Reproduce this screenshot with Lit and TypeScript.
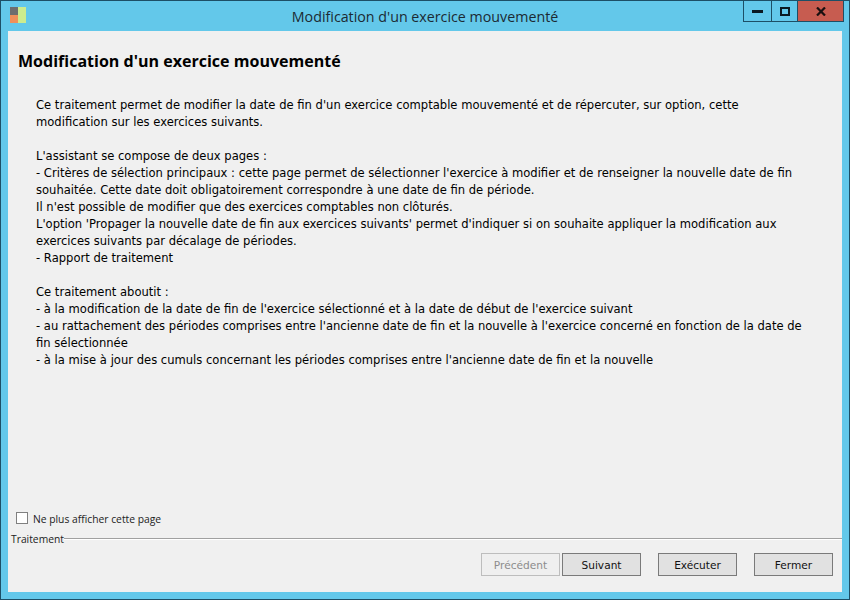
import { LitElement, html, css } from 'lit';
import { customElement } from 'lit/decorators.js';

const paragraphs: string[][] = [
  [
    "Ce traitement permet de modifier la date de fin d'un exercice comptable mouvementé et de répercuter, sur option, cette",
    'modification sur les exercices suivants.',
  ],
  [
    "L'assistant se compose de deux pages :",
    '- Critères de sélection principaux : cette page permet de sélectionner l\'exercice à modifier et de renseigner la nouvelle date de fin',
    'souhaitée. Cette date doit obligatoirement correspondre à une date de fin de période.',
    "Il n'est possible de modifier que des exercices comptables non clôturés.",
    "L'option 'Propager la nouvelle date de fin aux exercices suivants' permet d'indiquer si on souhaite appliquer la modification aux",
    'exercices suivants par décalage de périodes.',
    '- Rapport de traitement',
  ],
  [
    'Ce traitement aboutit :',
    "- à la modification de la date de fin de l'exercice sélectionné et à la date de début de l'exercice suivant",
    "- au rattachement des périodes comprises entre l'ancienne date de fin et la nouvelle à l'exercice concerné en fonction de la date de",
    'fin sélectionnée',
    "- à la mise à jour des cumuls concernant les périodes comprises entre l'ancienne date de fin et la nouvelle",
  ],
];

@customElement('app-root')
export class AppRoot extends LitElement {
  static styles = css`
    :host {
      display: block;
      width: 850px;
      height: 600px;
      font-family: 'DejaVu Sans', 'Open Sans', sans-serif;
      color: #000;
    }

    .window {
      box-sizing: border-box;
      width: 850px;
      height: 600px;
      display: flex;
      flex-direction: column;
      background: #63c8ea;
      border: 1px solid #1d4f66;
      padding: 0 7px 7px;
    }

    .titlebar {
      flex: none;
      height: 30px;
      display: grid;
      grid-template-columns: 1fr auto 1fr;
      align-items: start;
    }

    .app-icon {
      margin: 6px 0 0 2px;
      display: block;
    }

    .title {
      margin-top: 7px;
      font-family: 'Open Sans', sans-serif;
      font-size: 14.25px;
      line-height: 18px;
      color: #1c2a33;
    }

    .controls {
      justify-self: end;
      display: flex;
      height: 20px;
      border: 1px solid #1d4f66;
      border-top: none;
      margin-right: -2px;
    }

    .ctl {
      display: flex;
      align-items: center;
      justify-content: center;
      height: 20px;
    }

    .ctl.min {
      width: 27px;
      border-right: 1px solid #1d4f66;
    }

    .ctl.max {
      width: 25px;
      border-right: 1px solid #1d4f66;
    }

    .ctl.close {
      width: 45px;
      background: #c75c50;
    }

    .client {
      flex: 1;
      min-height: 0;
      display: flex;
      flex-direction: column;
      background: #f0f0f0;
    }

    h1 {
      margin: 20px 0 0 10px;
      font-family: 'Open Sans', sans-serif;
      font-size: 16.05px;
      line-height: 20px;
      font-weight: 700;
    }

    .body {
      flex: 1;
      margin: 26px 0 0 28px;
      font-size: 11.57px;
      line-height: 17px;
    }

    .body p {
      margin: 0 0 17px;
      white-space: nowrap;
    }

    .body span {
      display: block;
    }

    .check-row {
      display: flex;
      align-items: center;
      gap: 5px;
      margin: 0 0 0 8px;
      height: 16px;
      font-family: 'Open Sans', sans-serif;
      font-size: 10.3px;
      color: #222;
    }

    .box {
      box-sizing: border-box;
      width: 12px;
      height: 12px;
      margin-top: -2px;
      background: #fff;
      border: 1px solid #808080;
    }

    .group {
      display: flex;
      align-items: center;
      height: 14px;
      margin: 4px 0 0 3px;
      font-family: 'Open Sans', sans-serif;
      font-size: 10.3px;
      color: #222;
    }

    .group span {
      padding-top: 2px;
    }

    .group i {
      flex: 1;
      height: 1px;
      background: #a0a0a0;
      box-shadow: 0 1px 0 #fff;
    }

    .actions {
      display: flex;
      justify-content: flex-end;
      margin: 8px 9px 16px 0;
    }

    button {
      box-sizing: border-box;
      width: 79px;
      height: 23px;
      padding: 0;
      font: inherit;
      font-size: 10.6px;
      color: #111;
      background: #e1e1e1;
      border: 1px solid #7a7a7a;
      border-radius: 0;
    }

    button[disabled] {
      color: #8c8c8c;
      background: #efefef;
      border-color: #bdbdbd;
    }

    button.gap {
      margin-left: 17px;
    }

    button.gap-small {
      margin-left: 2px;
    }
  `;

  render() {
    return html`
      <div class="window">
        <div class="titlebar">
          <svg class="app-icon" width="16" height="16" viewBox="0 0 16 16">
            <rect x="0" y="0" width="8" height="8" fill="#6e6e6e"></rect>
            <rect x="0" y="8" width="8" height="8" fill="#f0905a"></rect>
            <rect x="8" y="0" width="8" height="16" fill="#cdec8e"></rect>
          </svg>
          <div class="title">Modification d'un exercice mouvementé</div>
          <div class="controls">
            <div class="ctl min">
              <svg width="11" height="4" viewBox="0 0 11 4"><rect width="11" height="3" y="1" fill="#0a1a22"></rect></svg>
            </div>
            <div class="ctl max">
              <svg width="10" height="9" viewBox="0 0 10 9"><rect x="1" y="1" width="8" height="7" fill="none" stroke="#0a1a22" stroke-width="2"></rect></svg>
            </div>
            <div class="ctl close">
              <svg width="10" height="9" viewBox="0 0 10 9"><path d="M1 0.5 L9 8.5 M9 0.5 L1 8.5" fill="none" stroke="#1a1010" stroke-width="2.2"></path></svg>
            </div>
          </div>
        </div>
        <div class="client">
          <h1>Modification d'un exercice mouvementé</h1>
          <div class="body">
            ${paragraphs.map(
              (lines) => html`<p>${lines.map((line) => html`<span>${line}</span>`)}</p>`
            )}
          </div>
          <label class="check-row"><span class="box"></span>Ne plus afficher cette page</label>
          <div class="group"><span>Traitement</span><i></i></div>
          <div class="actions">
            <button disabled>Précédent</button>
            <button class="gap-small">Suivant</button>
            <button class="gap">Exécuter</button>
            <button class="gap">Fermer</button>
          </div>
        </div>
      </div>
    `;
  }
}

declare global {
  interface HTMLElementTagNameMap {
    'app-root': AppRoot;
  }
}
